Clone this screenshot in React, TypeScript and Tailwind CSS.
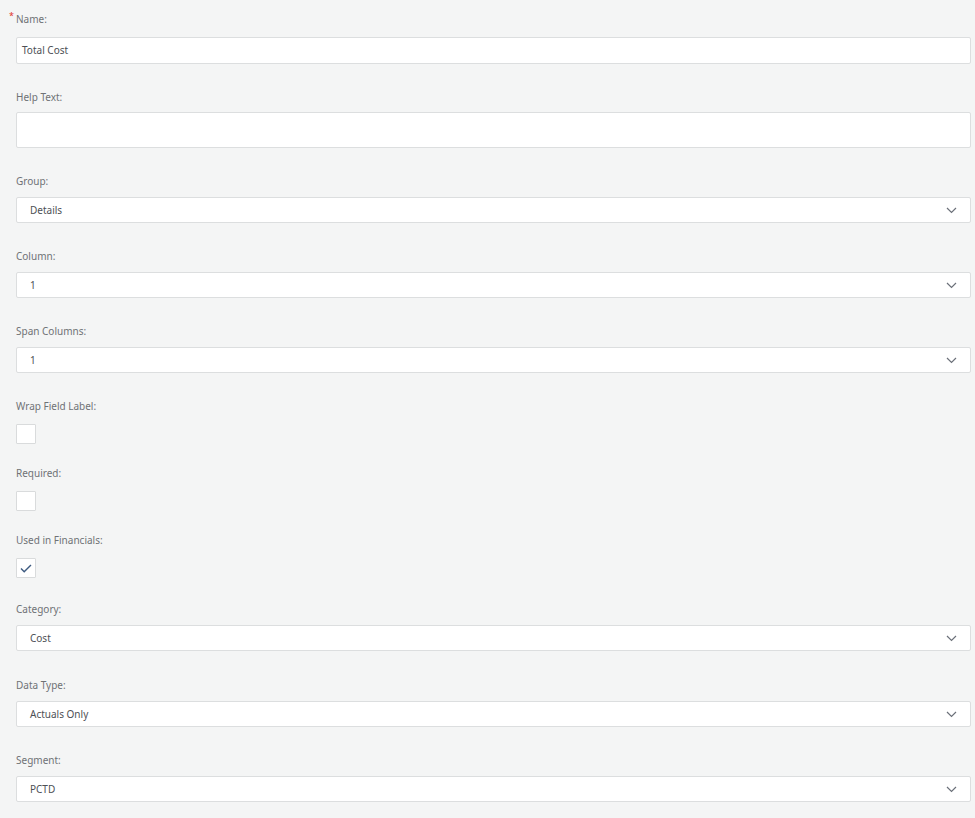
import { ReactNode } from 'react';

function Label({ children, required }: { children: ReactNode; required?: boolean }) {
  return (
    <div className="relative h-[14px] text-[10px] leading-[14px] text-[#6f7275]">
      {required && (
        <span className="absolute left-[-7px] top-[-3px] text-[9px] text-[#e0322b]">*</span>
      )}
      {children}
    </div>
  );
}

function Chevron() {
  return (
    <svg width="11" height="7" viewBox="0 0 11 7" fill="none" className="text-[#6b7079]">
      <path d="M1 1l4.5 4.5L10 1" stroke="currentColor" strokeWidth="1.2" />
    </svg>
  );
}

function SelectField({ label, value, gap = 'mt-[26px]' }: { label: string; value: string; gap?: string }) {
  return (
    <div className={gap}>
      <Label>{label}</Label>
      <div className="mt-[9px] flex h-[26px] items-center justify-between rounded-[2px] border border-[#dcdedf] bg-white px-[13px] text-[10px] text-[#4d5055]">
        <span>{value}</span>
        <Chevron />
      </div>
    </div>
  );
}

function CheckField({ label, checked, gap = 'mt-[22px]' }: { label: string; checked?: boolean; gap?: string }) {
  return (
    <div className={gap}>
      <Label>{label}</Label>
      <div className="mt-[11px] flex h-[20px] w-[20px] items-center justify-center rounded-[1px] border border-[#d9dbdc] bg-white">
        {checked && (
          <svg width="12" height="9" viewBox="0 0 12 9" fill="none">
            <path d="M1 4.5l3.2 3.2L11 1" stroke="#3d5a80" strokeWidth="1.4" />
          </svg>
        )}
      </div>
    </div>
  );
}

export default function App() {
  return (
    <div className="min-h-[818px] bg-[#f4f5f5] pl-[16px] pr-[4px] pt-[12px] font-['Noto_Sans',sans-serif]">
      <div>
        <Label required>Name:</Label>
        <div className="mt-[11px] flex h-[27px] items-center rounded-[2px] border border-[#dcdedf] bg-white px-[5px] text-[10px] text-[#4d5055]">
          Total Cost
        </div>
      </div>

      <div className="mt-[26px]">
        <Label>Help Text:</Label>
        <div className="mt-[8px] h-[36px] rounded-[2px] border border-[#dcdedf] bg-white" />
      </div>

      <SelectField label="Group:" value="Details" />
      <SelectField label="Column:" value="1" />
      <SelectField label="Span Columns:" value="1" />

      <CheckField label="Wrap Field Label:" gap="mt-[26px]" />
      <CheckField label="Required:" />
      <CheckField label="Used in Financials:" checked />

      <SelectField label="Category:" value="Cost" gap="mt-[24px]" />
      <SelectField label="Data Type:" value="Actuals Only" gap="mt-[27px]" />
      <SelectField label="Segment:" value="PCTD" gap="mt-[26px]" />
    </div>
  );
}
